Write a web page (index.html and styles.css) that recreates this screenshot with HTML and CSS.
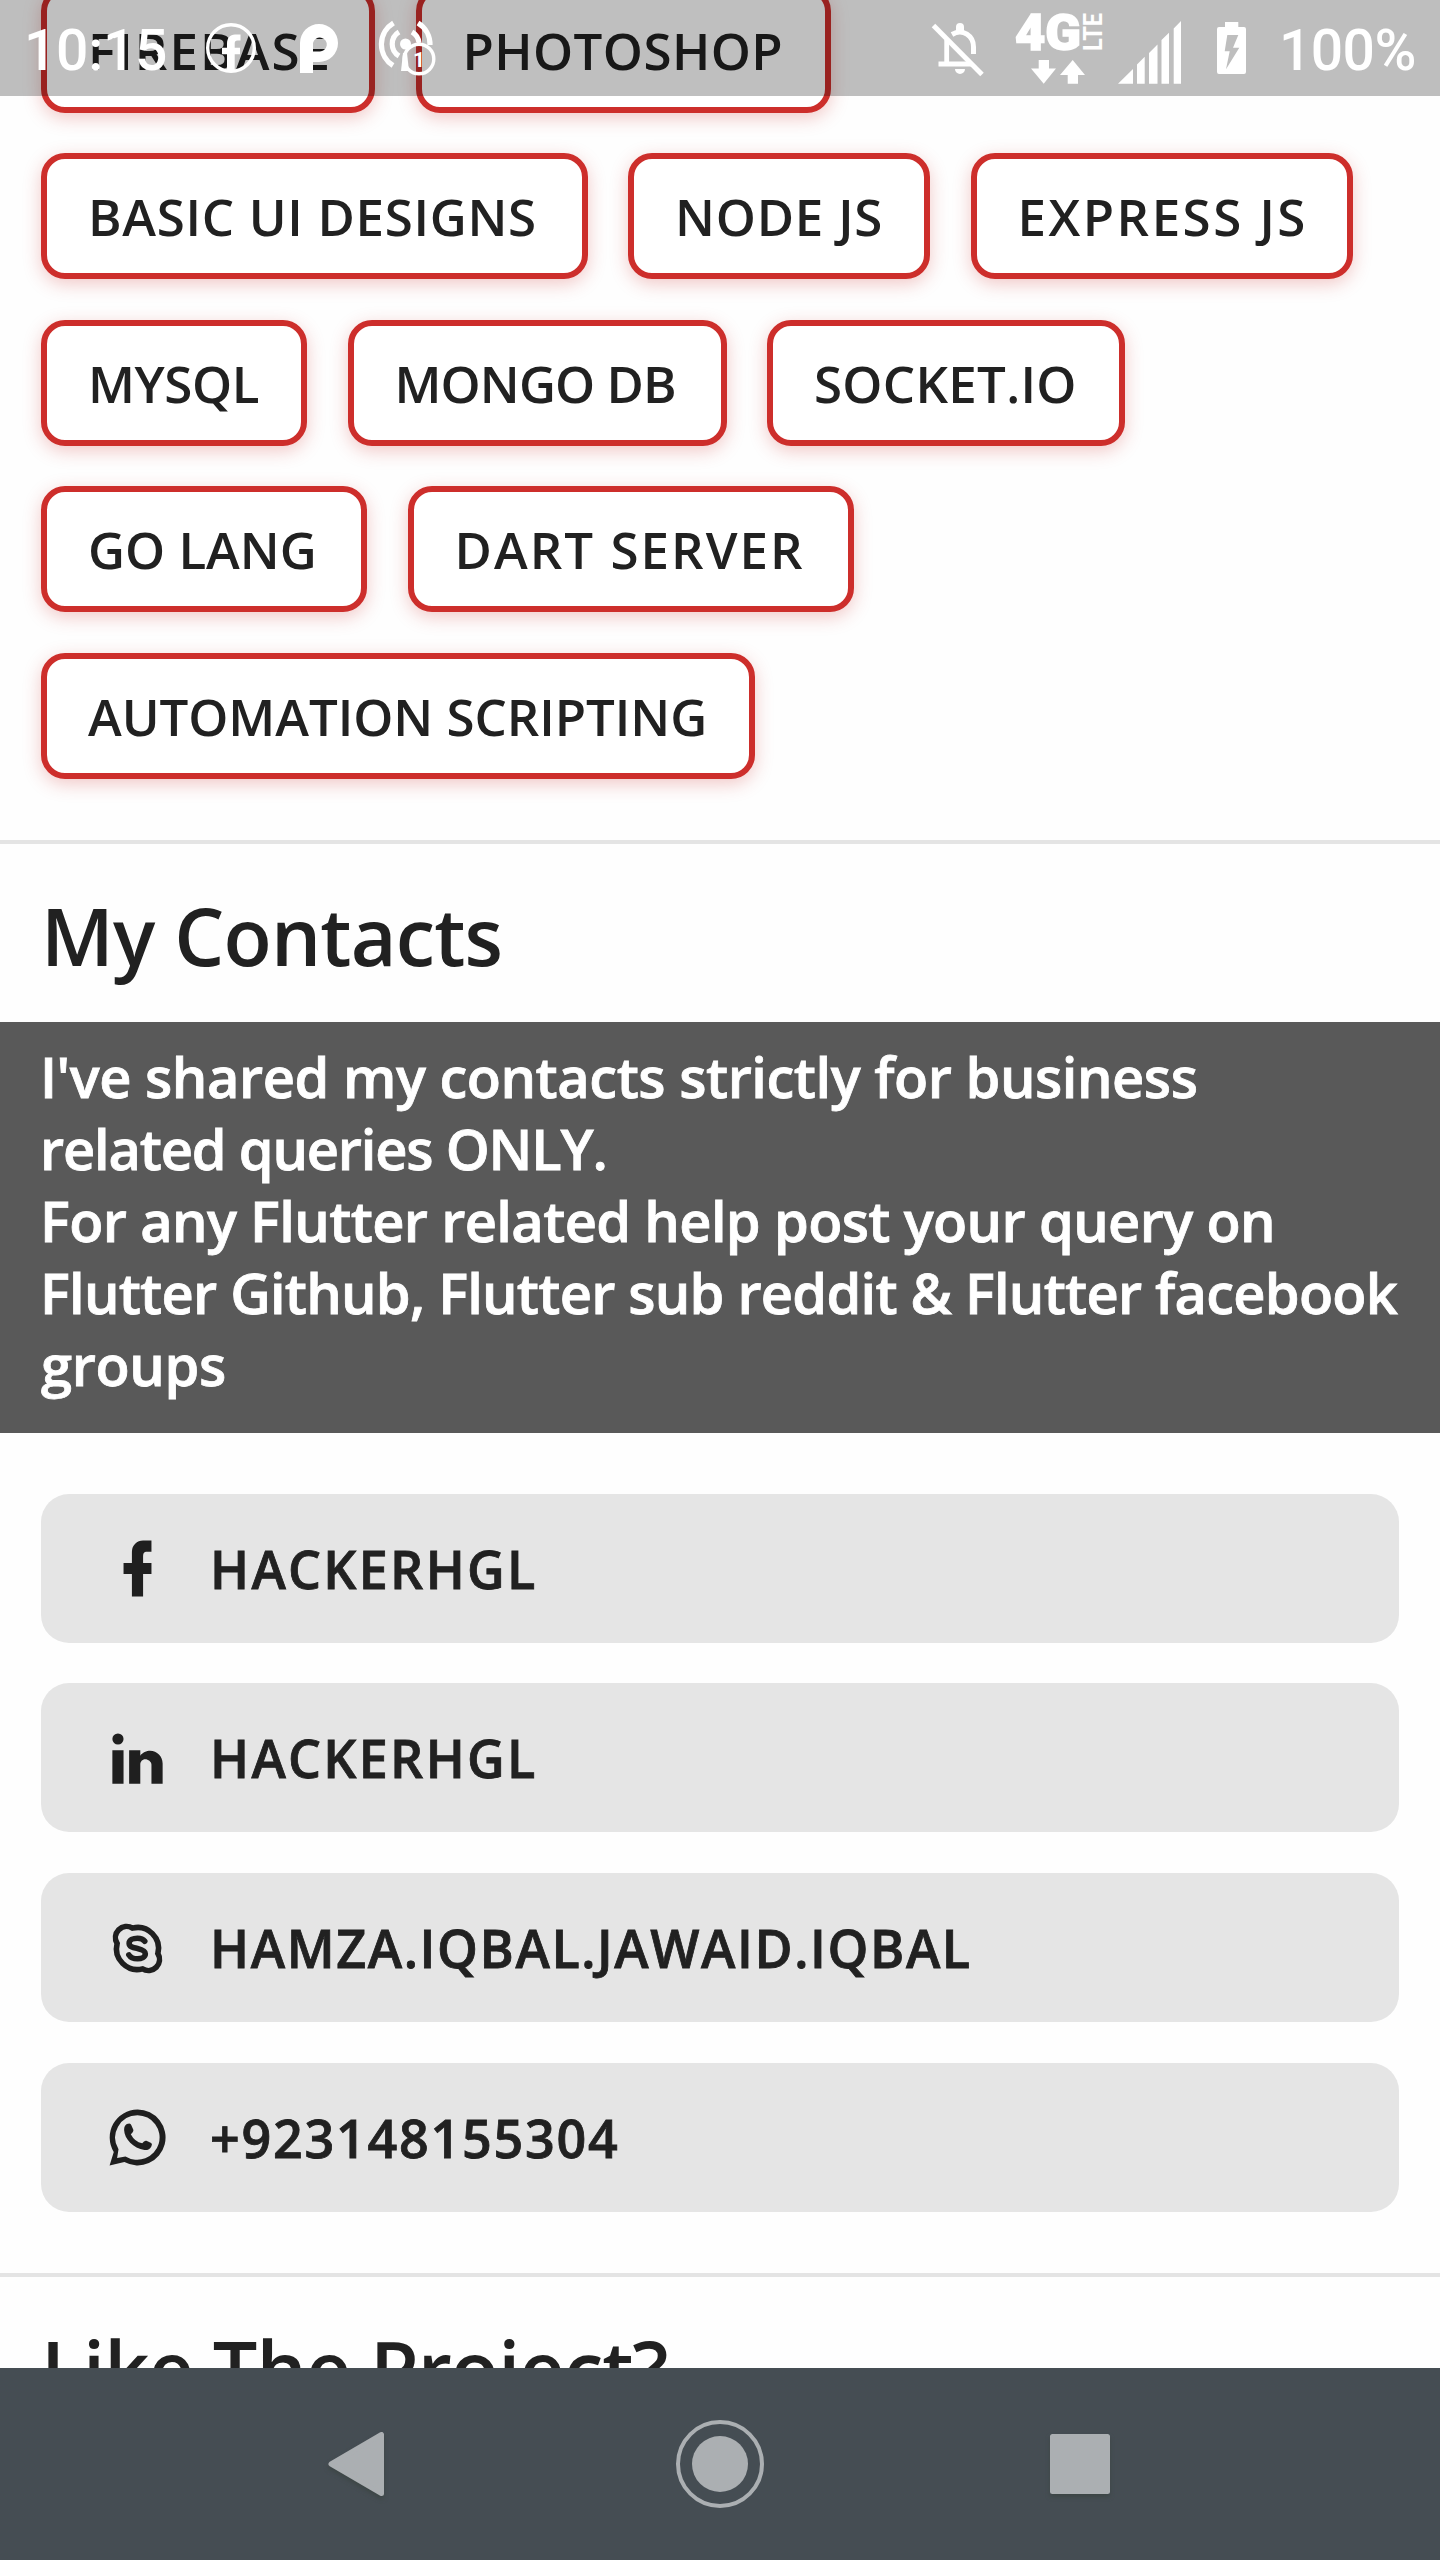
FILE: index.html
```html
<!DOCTYPE html>
<html lang="en">
<head>
<meta charset="utf-8">
<title>About me</title>
<link rel="stylesheet" href="styles.css">
</head>
<body>
<div class="screen">
  <header class="status">
    <span class="clock">10:15</span>
    <svg class="s-fb" viewBox="206 0 50 96" width="50" height="96"><circle cx="231" cy="48" r="23.3" fill="none" stroke="#fff" stroke-width="3.4"/><path fill="#fff" d="M227 72V54.300H222V47.700H227V44C227 38 230 34.600 235 34.600H240.500V40.500H237.500C235.500 40.500 234.700 41.500 234.700 43.500V47.700H240V54.300H234.700V72Z"/></svg>
    <svg class="s-p" viewBox="300 0 38 96" width="38" height="96"><path fill="#fff" fill-rule="evenodd" d="M300 73V43A19 19 0 1 1 319 62H313V73ZM313 51.500H319A7 7 0 1 0 313 43Z"/></svg>
    <svg class="s-hot" viewBox="378 0 58 96" width="58" height="96"><g fill="none" stroke="#fff" stroke-width="5.200"><path d="M393.500 23A25 25 0 0 0 393 65.500M418 23A25 25 0 0 1 430 45"/><path d="M399 32A14 14 0 0 0 399 56M412 32A14 14 0 0 1 419 43"/></g><circle cx="405.500" cy="44" r="5.500" fill="#fff"/><path fill="#fff" d="M403 53H407L409 71H401Z"/><circle cx="419" cy="59" r="14.800" fill="none" stroke="#fff" stroke-width="3.400"/><text x="419" y="67" text-anchor="middle" class="one">1</text></svg>
    <span class="spacer"></span>
    <svg class="s-bell" viewBox="930 0 56 96" width="56" height="96"><g fill="none" stroke="#fff"><path stroke-width="4.800" d="M946.700 40V64M938.500 64H972"/><path stroke-width="5" d="M952 34.500C963 28 973.500 36 973.500 47V54"/><path stroke-width="5" d="M933.500 25.500L982 74.500"/></g><path fill="#fff" d="M956 31V27A4 4 0 0 1 964 27V31ZM955 69H965A5 5 0 0 1 955 69Z"/></svg>
    <svg class="s-4g" viewBox="1014 0 92 96" width="92" height="96"><text x="1015" y="50" class="four" textLength="66" lengthAdjust="spacingAndGlyphs">4G</text><text transform="translate(1102 51) rotate(-90)" class="lte" textLength="38" lengthAdjust="spacingAndGlyphs">LTE</text><path fill="#fff" d="M1038.700 60H1049V68.500H1056L1043.700 83.700L1031 68.500H1038.700ZM1072.700 60L1085 75H1078V83.700H1067.700V75H1060Z"/></svg>
    <svg class="s-sig" viewBox="1118 0 63 96" width="63" height="96"><path fill="#fff" d="M1118 83.700L1133 69V83.700ZM1137 83.700V64.500L1144.700 56.700V83.700ZM1149 83.700V53L1157.500 44.500V83.700ZM1161.500 83.700V40L1169 32.700V83.700ZM1173.700 83.700V28.500L1181 21V83.700Z"/></svg>
    <svg class="s-bat" viewBox="1217 0 29 96" width="29" height="96"><path fill="#fff" fill-rule="evenodd" d="M1225 22H1238.300V27H1244Q1246 27 1246 29V72Q1246 74 1244 74H1219Q1217 74 1217 72V29Q1217 27 1219 27H1225ZM1227.300 35L1224.700 51.300H1229.700L1226 69.300L1239.300 47.700H1233L1238.300 35Z"/></svg>
    <span class="percent">100%</span>
  </header>

  <main class="content">
    <div class="chips">
      <span class="chip firebase">FIREBASE</span>
      <span class="chip photoshop">PHOTOSHOP</span>
      <span class="chip design">BASIC UI DESIGNS</span>
      <span class="chip node">NODE JS</span>
      <span class="chip express">EXPRESS JS</span>
      <span class="chip mysql">MYSQL</span>
      <span class="chip mongo">MONGO DB</span>
      <span class="chip socket">SOCKET.IO</span>
      <span class="chip golang">GO LANG</span>
      <span class="chip dart">DART SERVER</span>
      <span class="chip automation">AUTOMATION SCRIPTING</span>
    </div>
    <section class="section">
      <h2 class="title">My Contacts</h2>
      <p class="notice">
        <span class="line l1">I've shared my contacts strictly for business</span>
        <span class="line l2">related queries ONLY.</span>
        <span class="line l3">For any Flutter related help post your query on</span>
        <span class="line l4">Flutter Github, Flutter sub reddit &amp; Flutter facebook</span>
        <span class="line l5">groups</span>
      </p>
      <div class="contacts">
        <a class="contact handle"><svg class="icon" viewBox="0 0 24 24"><path d="M17 2V6H15C14.310 6 14 6.810 14 7.500V10H17V14H14V22H10V14H7V10H10V6A4 4 0 0 1 14 2Z"/></svg>HACKERHGL</a>
        <a class="contact handle"><svg class="icon" viewBox="0 0 24 24"><path d="M21 21H17V14.250C17 13.190 15.810 12.310 14.750 12.310S13 13.190 13 14.250V21H9V9H13V11C13.660 9.930 15.360 9.240 16.500 9.240C19 9.240 21 11.280 21 13.750ZM7 21H3V9H7ZM5 3A2 2 0 1 1 5 7A2 2 0 0 1 5 3Z"/></svg>HACKERHGL</a>
        <a class="contact skype"><svg class="icon outline" viewBox="0 0 24 24"><path d="M10.200 4.700A7.500 7.500 0 0 1 19.300 13.800A4 4 0 0 1 13.800 19.300A7.500 7.500 0 0 1 4.700 10.200A4 4 0 0 1 10.200 4.700Z"/><path stroke-linecap="round" d="M14.600 9.400C14 8.600 13.100 8.300 12 8.300C10.400 8.300 9 8.900 9 10.100C9 11.500 10.500 11.700 12 12C13.700 12.400 14.800 12.800 14.800 13.900C14.800 15.100 13.400 15.700 12 15.700C10.600 15.700 9.500 15.300 8.900 14.300"/></svg>HAMZA.IQBAL.JAWAID.IQBAL</a>
        <a class="contact phone"><svg class="icon" viewBox="0 0 24 24"><path fill-rule="evenodd" d="M12 2A10 10 0 1 1 7.300 20.800L2 22L3.500 17.200A10 10 0 0 1 12 2ZM12 4A8 8 0 0 0 5.200 16.200L4.700 19.300L7.700 18.800A8 8 0 1 0 12 4Z"/><path d="M8.200 7.200Q9.500 6.600 9.800 7.600L10.500 9.200Q10.700 9.800 9.600 10.800Q11 13.500 13.700 14.100Q14.500 12.900 15.200 13.200L16.900 14Q17.400 14.300 17 15.100Q16.300 16.600 14.500 16.500C10.500 15.800 7.300 12.500 7.200 9.300Q7.200 7.700 8.200 7.200Z"/></svg>+923148155304</a>
      </div>
    </section>
    <section class="section">
      <h2 class="title like">Like The Project?</h2>
    </section>
  </main>

  <nav class="navbar">
    <svg class="nav-icon" viewBox="0 0 100 100"><path class="cast" d="M21 50L71.500 20.500V79.500Z"/></svg>
    <svg class="nav-icon" viewBox="0 0 100 100"><circle cx="50" cy="50" r="28"/><circle cx="50" cy="50" r="42" fill="none" stroke="#abafb2" stroke-width="4"/></svg>
    <svg class="nav-icon" viewBox="0 0 100 100"><rect class="cast" x="22.500" y="22.500" width="55" height="55"/></svg>
  </nav>
</div>
</body>
</html>
```
FILE: styles.css
```css
* { box-sizing: border-box; }
body { margin: 0; background: #fefefe; }
.screen {
  position: relative;
  display: flex;
  flex-direction: column;
  width: 1440px;
  height: 2560px;
  overflow: hidden;
  font-family: "Open Sans", "Noto Sans", sans-serif;
  font-weight: 600;
  color: #212121;
}

/* translucent system bar lying over the scrolled content */
.status {
  position: absolute;
  inset: 0 0 auto 0;
  z-index: 2;
  display: flex;
  align-items: center;
  height: 96px;
  padding: 0 22px 0 24px;
  background: rgba(0, 0, 0, .25);
  color: #fff;
  font: 500 57px/96px Roboto, sans-serif;
}
.status svg { flex: none; display: block; overflow: visible; }
.clock { width: 182px; padding-top: 5px; letter-spacing: -.3px; white-space: nowrap; }
.s-p { margin-left: 44px; }
.s-hot { margin-left: 40px; }
.spacer { flex: 1; }
.s-4g { margin-left: 28px; }
.s-sig { margin-left: 12px; }
.s-bat { margin-left: 36px; }
.percent { width: 139px; margin-left: 33px; padding-top: 5px; letter-spacing: -.6px; white-space: nowrap; }
.one { font: 700 21px Roboto, sans-serif; fill: #fff; }
.four { font: 900 50px Roboto, sans-serif; fill: #fff; stroke: #fff; stroke-width: 1.5px; }
.lte { font: 700 25px Roboto, sans-serif; fill: #fff; }

.content { flex: 1; min-height: 0; overflow: hidden; }
.chips {
  display: flex;
  flex-wrap: wrap;
  align-content: flex-start;
  gap: 40.5px;
  height: 840px;
  margin-top: -13.5px;
  margin-bottom: 13.5px;
  padding: 0 41px;
}
.chip {
  height: 126px;
  padding-left: 41px;
  border: 6px solid #cd2e2b;
  border-radius: 24px;
  background: #fff;
  box-shadow: 0 5px 18px rgba(205, 46, 43, .26);
  font-size: 51px;
  line-height: 114px;
  white-space: nowrap;
}
.firebase { width: 334px; letter-spacing: 2.05px; }
.photoshop { width: 415px; letter-spacing: .43px; }
.design { width: 546.5px; letter-spacing: .7px; }
.node { width: 302px; letter-spacing: .8px; }
.express { width: 382.5px; letter-spacing: 2.5px; }
.mysql { width: 266px; letter-spacing: -.4px; }
.mongo { width: 379px; letter-spacing: -.9px; }
.socket { width: 358px; letter-spacing: .3px; }
.golang { width: 326px; letter-spacing: 0; }
.dart { width: 446px; letter-spacing: 2.05px; }
.automation { width: 714px; letter-spacing: -.05px; }

.section { border-top: 4px solid #e4e4e4; }
.title {
  height: 178px;
  margin: 0;
  padding-left: 41px;
  font-size: 79px;
  font-weight: 600;
  line-height: 183px;
  letter-spacing: -.8px;
}
.like { letter-spacing: -.9px; }
.notice {
  height: 411px;
  margin: 0;
  padding: 18px 0 0 40px;
  background: #595959;
  color: #fff;
  font-size: 56px;
  line-height: 72px;
  -webkit-text-stroke: .8px #fff;
}
.line { display: block; white-space: nowrap; }
.l1 { letter-spacing: -.47px; }
.l2 { letter-spacing: -1.2px; }
.l3 { letter-spacing: -.65px; }
.l4 { letter-spacing: -.77px; }
.l5 { padding-left: 1px; letter-spacing: -.36px; }

.contacts {
  display: flex;
  flex-direction: column;
  gap: 40.7px;
  padding: 60.7px 41px 61.5px;
}
.contact {
  display: flex;
  align-items: center;
  gap: 39px;
  height: 149px;
  padding-left: 63px;
  border-radius: 28px;
  background: #e5e5e5;
  font-size: 52px;
  line-height: 149px;
  -webkit-text-stroke: .8px #212121;
}
.handle { letter-spacing: 2.3px; }
.skype { letter-spacing: 1.6px; }
.phone { letter-spacing: 1.77px; }
.icon { width: 67px; height: 67px; margin-top: 1px; fill: #1f1f1f; }
.outline { fill: none; stroke: #1f1f1f; stroke-width: 2; }

.navbar {
  display: flex;
  flex: none;
  align-items: center;
  justify-content: center;
  gap: 260px;
  height: 192px;
  background: #454d53;
}
.nav-icon { width: 100px; height: 100px; fill: #abafb2; }
.cast {
  stroke: #abafb2;
  stroke-width: 5;
  stroke-linejoin: round;
  filter: drop-shadow(0 3px 2px rgba(55, 65, 60, .6));
}
```
